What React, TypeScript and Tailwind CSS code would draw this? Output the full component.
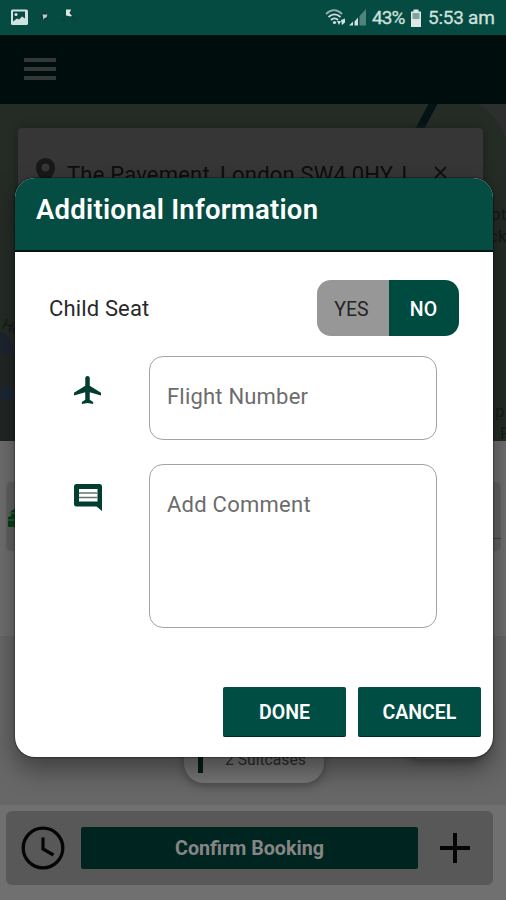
import { useState } from "react";

function StatusBar() {
  return (
    <div className="flex h-[35px] items-center justify-between bg-[#054b42] pt-px pr-[11px] pl-[11px] text-[#cfe0dd]">
      <svg width="70" height="20" viewBox="0 0 70 20">
        <rect x="0" y="1.500" width="17" height="15.500" rx="1.500" fill="#cfe3e0" />
        <path d="M2 3.500h12v7l-3-2-3 3-2-1-4 3z" fill="#0a4a42" />
        <circle cx="5" cy="6.500" r="1.600" fill="#cfe3e0" />
        <circle cx="33.500" cy="8.500" r="3.600" fill="#123733" />
        <path d="M31.500 6.500h5l-1 3-2 .5-1 2z" fill="#b9c9cb" />
        <path d="M55 1.500h5l-1 3 2 3-1 1-5-1z" fill="#dbe5e4" />
        <path d="M59 4l2 3M61 8l4 5M51 13l3-1" stroke="#163b37" strokeWidth="1.500" />
      </svg>
      <div className="flex items-center">
        <svg width="41" height="20" viewBox="0 0 41 20" fill="none">
          <path d="M1 6c5-5 11-5 16 0" stroke="#8fb0ab" strokeWidth="1.800" />
          <path d="M3.500 9c4-3.500 8-3.500 12 0M6 12c2-2 5-2 7 0" stroke="#cfe0dd" strokeWidth="1.800" />
          <circle cx="9.500" cy="14.500" r="1.600" fill="#cfe0dd" />
          <path d="M12 13h4l-2 4zM16 12l4-1.500v4L17 17z" fill="#cfe0dd" />
          <path d="M24 17.500h4v-4zM29.500 17.500h3.500v-8l-3.500 4z" fill="#cfe0dd" />
          <path d="M34.500 17.500H41V1l-6.500 7z" fill="#4f837b" />
        </svg>
        <span className="ml-[6px] w-[34px] text-[19px] tracking-[-0.9px] whitespace-nowrap [-webkit-text-stroke:0.3px]">
          43%
        </span>
        <svg className="ml-[4px]" width="12" height="19" viewBox="0 0 12 19">
          <path d="M1 2.500h2.500v-2h5v2H11V18H1z" fill="#dce8e6" />
          <rect x="2.500" y="4" width="7" height="6" fill="#7fa39e" />
        </svg>
        <span className="ml-[6px] w-[67px] text-[19px] tracking-[-0.25px] whitespace-nowrap [-webkit-text-stroke:0.3px]">
          5:53 am
        </span>
      </div>
    </div>
  );
}

function BookingScreen() {
  return (
    <div className="flex h-[900px] flex-col">
      <StatusBar />
      <header className="flex h-[69px] items-center bg-[#000d0d] pb-px pl-6">
        <div className="flex w-8 flex-col gap-[5px]">
          <div className="h-[4px] bg-[#343938]" />
          <div className="h-[4px] bg-[#343938]" />
          <div className="h-[4px] bg-[#343938]" />
        </div>
      </header>

      <section className="relative h-[337px] overflow-hidden bg-[#252c26] px-[18px] pt-6">
        <svg className="absolute inset-0" width="506" height="337" viewBox="0 0 506 337">
          <path d="M478 0h28v35q-8-24-28-35z" fill="#2d2e2e" />
          <path d="M434-2L416 32" stroke="#031315" strokeWidth="8" />
          <path d="M0 227q12 4 15 25v18H0z" fill="#1e2530" />
          <path d="M0 250h15v87H0z" fill="#232626" />
          <path d="M0 288q9-12 15 2v5H0z" fill="#1b2736" />
          <g fill="#161917" fontFamily="Roboto, sans-serif" fontSize="17">
            <text x="491" y="116">ot</text>
            <text x="489" y="138">ck</text>
            <text x="495" y="313" fill="#112019">p</text>
            <text x="500" y="335" fill="#112019">P</text>
            <text x="1" y="224" fontSize="15" transform="rotate(25 1 224)">Ho</text>
          </g>
        </svg>
        <div className="relative flex h-[90px] w-[465px] items-start rounded-[4px] bg-[#363636] pt-[30px] pl-[18px] text-[#0d0d0d] shadow-[0_0_8px_#1b201c]">
          <svg width="19" height="27" viewBox="0 0 19 27">
            <path
              fillRule="evenodd"
              fill="#181818"
              d="M9.500 0A9.500 9.500 0 0 0 0 9.500C0 17 9.500 27 9.500 27S19 17 19 9.500A9.500 9.500 0 0 0 9.500 0zm0 5.500a4 4 0 1 1 0 8 4 4 0 0 1 0-8z"
            />
          </svg>
          <span className="mt-px ml-[12px] w-[347px] text-[22px] leading-8 tracking-[0.2px] whitespace-nowrap">
            The Pavement, London SW4 0HY, I
          </span>
          <svg className="mt-[8px] ml-[20px]" width="13" height="13" viewBox="0 0 13 13">
            <path d="M1 1l11 11M12 1L1 12" stroke="#101010" strokeWidth="1.800" />
          </svg>
        </div>
      </section>

      <section className="h-[195px] bg-[#6f6f6f] px-[6px] pt-[41px]">
        <div className="flex h-[69px] w-[495px] items-center overflow-hidden rounded-[5px] bg-[#626262]">
          <svg width="12" height="24" viewBox="0 0 12 24">
            <path d="M2 22V12l3-1V6l7-4v20z" fill="#0b3f1c" />
            <path d="M3 8h6M2 15h8" stroke="#276b28" strokeWidth="1.500" />
          </svg>
          <div className="mt-[43px] ml-auto h-px w-[12px] bg-[#444]" />
        </div>
      </section>

      <section className="flex h-[169px] items-end bg-[#676767] pb-[22px] pl-[184px]">
        <div className="flex h-[60px] w-[140px] items-end rounded-[20px] bg-[#757575] pb-[10px] pl-[14px] shadow-[0_3px_8px_#484848]">
          <div className="h-[36px] w-[5px] bg-[#031d19]" />
          <span className="ml-[22px] text-[15.700px] leading-[27px] text-[#2c2c2c]">2 Suitcases</span>
        </div>
        <div className="mb-[24px] ml-[78px] h-[60px] w-[86px] rounded-[20px] bg-[#626262] shadow-[0_3px_8px_#484848]" />
      </section>

      <footer className="h-[95px] bg-[#707070] px-[6px] pt-[6px]">
        <div className="flex h-[74px] w-[487px] items-center rounded-[6px] bg-[#585858]">
          <svg className="ml-[15px]" width="44" height="44" viewBox="0 0 44 44" fill="none" stroke="#050505">
            <circle cx="22" cy="22" r="19.800" strokeWidth="3.300" />
            <path d="M22 11.500V23l10.500 6" strokeWidth="3.200" />
          </svg>
          <button className="ml-[16px] h-[42px] w-[337px] rounded-[2px] bg-[#002520] pt-[2px] text-[19.700px] font-bold text-[#858585]">
            Confirm Booking
          </button>
          <svg className="ml-[22px]" width="30" height="30" viewBox="0 0 30 30">
            <path d="M15 0v30M0 15h30" stroke="#050505" strokeWidth="4" />
          </svg>
        </div>
      </footer>
    </div>
  );
}

function AirplaneIcon() {
  return (
    <svg width="27" height="28" viewBox="64 48 384 416" preserveAspectRatio="none">
      <path
        fill="#013d31"
        d="M448 336v-40L288 192V79.500C288 62 273 48 256 48s-32 14-32 31.500V192L64 296v40l160-48v113.600l-48 31.200V464l80-16 80 16v-31.200l-48-31.200V288l160 48z"
      />
    </svg>
  );
}

function CommentIcon() {
  return (
    <svg width="28" height="27" viewBox="0 0 28 27">
      <path
        fill="#013d31"
        fillRule="evenodd"
        d="M2.500 0h23A2.500 2.500 0 0 1 28 2.500V27l-5.500-4.500h-20A2.500 2.500 0 0 1 0 20V2.500A2.500 2.500 0 0 1 2.500 0zM5 5v12.500h18.500V5z"
      />
      <path d="M5 9h18.500M5 13.500h18.500" stroke="#68736f" strokeWidth="1.500" />
    </svg>
  );
}

export default function App() {
  const [childSeat, setChildSeat] = useState(false);

  return (
    <div className="relative h-[900px] w-[506px] overflow-hidden font-['Roboto',sans-serif]">
      <BookingScreen />

      <div className="absolute top-[178px] left-[15px] flex h-[579px] w-[478px] flex-col overflow-hidden rounded-[20px] bg-white shadow-[0_12px_26px_rgba(0,0,0,0.4),0_0_2px_#000]">
        <div className="h-[74px] border-b-2 border-[#03150f] bg-[#054d43] pt-[15px] pl-[21px] text-[27.500px] leading-[34px] font-semibold tracking-[0.24px] whitespace-nowrap text-white">
          Additional Information
        </div>

        <div className="mt-[28px] flex h-[56px] items-center justify-between pr-[34px] pl-[34px]">
          <span className="text-[22px] tracking-[0.15px] text-[#292929]">Child Seat</span>
          <div className="flex h-[56px] w-[142px] overflow-hidden rounded-[14px] text-[19.500px]">
            <button onClick={() => setChildSeat(true)} className="w-[72px] bg-[#979797] pt-[3px] pr-[3px] text-[#252525]">
              YES
            </button>
            <button
              onClick={() => setChildSeat(false)}
              aria-pressed={!childSeat}
              className="w-[70px] bg-[#004b40] pt-[3px] pr-px font-medium text-white"
            >
              NO
            </button>
          </div>
        </div>

        <div className="mt-[20px] flex pl-[59px]">
          <div className="w-[75px] pt-[20px]">
            <AirplaneIcon />
          </div>
          <input
            placeholder="Flight Number"
            className="h-[84px] w-[288px] rounded-[14px] border-[1.5px] border-[#a2a2a2] pb-[4px] pl-[17px] text-[22px] tracking-[0.2px] placeholder:text-[#6c6c6c]"
          />
        </div>

        <div className="mt-[24px] flex pl-[59px]">
          <div className="w-[75px] pt-[20px]">
            <CommentIcon />
          </div>
          <textarea
            placeholder="Add Comment"
            className="h-[164px] w-[288px] resize-none rounded-[14px] border-[1.5px] border-[#a2a2a2] pt-[24px] pl-[17px] text-[22px] leading-8 tracking-[0.25px] placeholder:text-[#6c6c6c]"
          />
        </div>

        <div className="mt-[59px] flex justify-end gap-[12px] pr-[12px] text-[19.500px] font-semibold text-white">
          <button className="h-[50px] w-[123px] rounded-[2px] border-b border-[#002a23] bg-[#004e43] pt-[2px]">
            DONE
          </button>
          <button className="h-[50px] w-[123px] rounded-[2px] border-b border-[#002a23] bg-[#004e43] pt-[2px]">
            CANCEL
          </button>
        </div>
      </div>
    </div>
  );
}
